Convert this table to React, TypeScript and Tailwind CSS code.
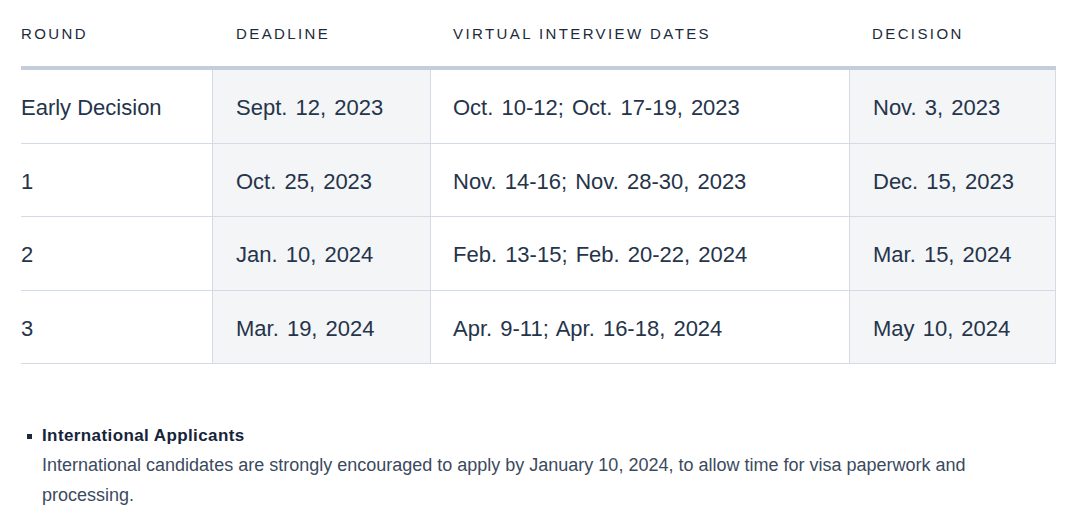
const rows = [
  { round: 'Early Decision', deadline: 'Sept. 12, 2023', interview: 'Oct. 10-12; Oct. 17-19, 2023', decision: 'Nov. 3, 2023' },
  { round: '1', deadline: 'Oct. 25, 2023', interview: 'Nov. 14-16; Nov. 28-30, 2023', decision: 'Dec. 15, 2023' },
  { round: '2', deadline: 'Jan. 10, 2024', interview: 'Feb. 13-15; Feb. 20-22, 2024', decision: 'Mar. 15, 2024' },
  { round: '3', deadline: 'Mar. 19, 2024', interview: 'Apr. 9-11; Apr. 16-18, 2024', decision: 'May 10, 2024' },
]

const cols = 'grid grid-cols-[191px_218px_419px_207px]'

export default function App() {
  return (
    <div className="w-[1080px] h-[518px] bg-white pl-[21px] text-[#25344a] font-['Liberation_Sans',Arial,sans-serif] overflow-hidden">
      {/* Header */}
      <div className={`${cols} h-[66px] items-center pt-[3px] text-[15px] tracking-[0.16em] text-[#1c2a3b]`}>
        <div>ROUND</div>
        <div className="pl-[24px]">DEADLINE</div>
        <div className="pl-[23px]">VIRTUAL INTERVIEW DATES</div>
        <div className="pl-[23px]">DECISION</div>
      </div>

      {/* Body */}
      <div className="w-[1035px] border-t-[4px] border-[#c4cedb]">
        {rows.map((r) => (
          <div key={r.round} className={`${cols} h-[73.5px] border-b border-[#d3dbe6] text-[22px] [word-spacing:2px] [&>div]:pt-[3px]`}>
            <div className="flex items-center [word-spacing:0px]">{r.round}</div>
            <div className="flex items-center pl-[23px] bg-[#f3f5f7] border-l border-[#d3dbe6]">{r.deadline}</div>
            <div className="flex items-center pl-[22px] border-l border-[#d3dbe6]">{r.interview}</div>
            <div className="flex items-center pl-[23px] bg-[#f3f5f7] border-x border-[#d3dbe6]">{r.decision}</div>
          </div>
        ))}
      </div>

      {/* Notes */}
      <ul className="mt-[60px] pl-[6px]">
        <li className="flex gap-[10px]">
          <span className="mt-[10px] w-[5px] h-[5px] bg-[#1c2a3b] shrink-0" />
          <div>
            <div className="text-[17px] font-bold tracking-[0.4px] leading-[24px] text-[#16243a]">International Applicants</div>
            <p className="mt-[2px] text-[18px] leading-[30px] text-[#3b4a5e] w-[960px]">
              International candidates are strongly encouraged to apply by January 10, 2024, to allow time for visa paperwork and processing.
            </p>
          </div>
        </li>
      </ul>
    </div>
  )
}
